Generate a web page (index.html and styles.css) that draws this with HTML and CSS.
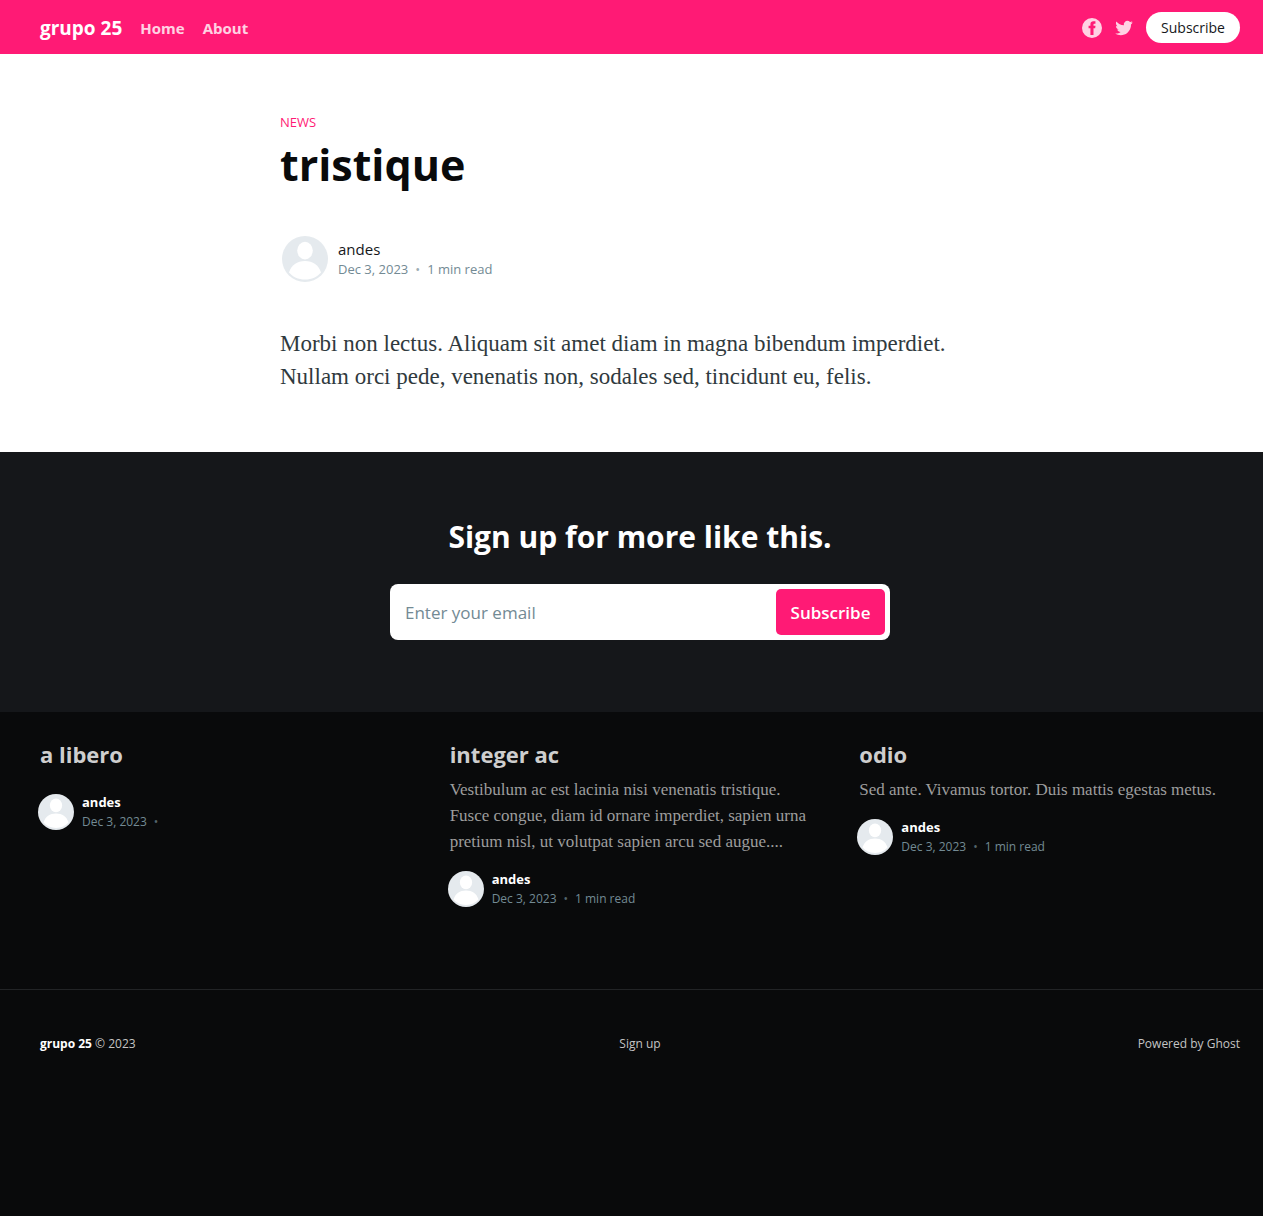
FILE: index.html
```html
<!DOCTYPE html>
<html lang="en">
<head>
<meta charset="utf-8">
<meta name="viewport" content="width=device-width, initial-scale=1">
<title>tristique</title>
<link rel="stylesheet" href="styles.css">
</head>
<body>
<svg class="sprite" aria-hidden="true">
  <symbol id="avatar" viewBox="0 0 46 46">
    <circle cx="23" cy="23" r="23" fill="#e5eaee"/>
    <ellipse cx="23" cy="14.600" rx="7.800" ry="8.800" fill="#fff"/>
    <path d="M7 36.500C9.500 29 15 25 23 25s13.500 4 16 11.500C35 41 30 43.500 23 43.500S11 41 7 36.500z" fill="#fff"/>
  </symbol>
</svg>

<header class="site-header gutter">
  <nav class="nav">
    <a class="brand" href="#">grupo 25</a>
    <a class="nav-link" href="#">Home</a>
    <a class="nav-link" href="#">About</a>
  </nav>
  <div class="actions">
    <a class="social" href="#" aria-label="Facebook">
      <svg width="20" height="20" viewBox="0 0 32 32"><path d="M16 0a16 16 0 1 0 0 32 16 16 0 0 0 0-32zm5.500 9.200h-1.700c-1.100 0-1.400.500-1.400 1.300V12.500h3.200l-.5 4h-2.700V27h-4.900V16.500H10.500v-4h3V9.500C13.500 6.500 15.400 5 18.200 5c1.300 0 2.700.1 3.300.2z" fill="currentColor"/></svg>
    </a>
    <a class="social" href="#" aria-label="Twitter">
      <svg width="20" height="20" viewBox="0 0 32 32"><path d="M30.063 7.313c-.813 1.125-1.750 2.125-2.875 2.938v.75c0 1.563-.188 3.125-.688 4.625a15.088 15.088 0 0 1-2.063 4.438c-.875 1.438-2 2.688-3.250 3.813a15.015 15.015 0 0 1-4.625 2.563c-1.813.688-3.750 1-5.750 1-3.250 0-6.188-.875-8.875-2.625.438.063.875.125 1.375.125 2.688 0 5.063-.875 7.188-2.500-1.250 0-2.375-.375-3.375-1.125s-1.688-1.688-2.063-2.875c.438.063.813.125 1.125.125.500 0 1-.063 1.500-.250-1.313-.250-2.438-.938-3.313-1.938a5.673 5.673 0 0 1-1.313-3.688v-.063c.813.438 1.688.688 2.625.688a5.228 5.228 0 0 1-1.875-2c-.500-.875-.688-1.813-.688-2.750 0-1.063.250-2.063.750-2.938 1.438 1.750 3.188 3.188 5.250 4.250s4.313 1.688 6.688 1.813a5.579 5.579 0 0 1 1.500-5.438c1.125-1.125 2.500-1.688 4.125-1.688s3.063.625 4.188 1.813a11.480 11.480 0 0 0 3.688-1.375c-.438 1.375-1.313 2.438-2.563 3.188 1.125-.125 2.188-.438 3.313-.875z" fill="currentColor"/></svg>
    </a>
    <button class="pill" type="button">Subscribe</button>
  </div>
</header>

<main>
  <article class="article gutter">
    <div class="article-inner">
      <a class="tag" href="#">NEWS</a>
      <h1 class="title">tristique</h1>
      <div class="byline">
        <svg class="avatar"><use href="#avatar"/></svg>
        <div>
          <a class="author" href="#">andes</a>
          <div class="meta"><time datetime="2023-12-03">Dec 3, 2023</time><span class="dot">•</span><span>1 min read</span></div>
        </div>
      </div>
      <p class="content">Morbi non lectus. Aliquam sit amet diam in magna bibendum imperdiet. Nullam orci pede, venenatis non, sodales sed, tincidunt eu, felis.</p>
    </div>
  </article>

  <section class="signup gutter">
    <h2 class="signup-title">Sign up for more like this.</h2>
    <form class="signup-form">
      <input class="email" type="email" placeholder="Enter your email" aria-label="Enter your email">
      <button class="submit" type="button">Subscribe</button>
    </form>
  </section>
</main>

<aside class="cards gutter">
  <article class="card">
    <h2 class="card-title"><a href="#">a libero</a></h2>
    <div class="byline small">
      <svg class="avatar"><use href="#avatar"/></svg>
      <div>
        <a class="author" href="#">andes</a>
        <div class="meta"><time datetime="2023-12-03">Dec 3, 2023</time><span class="dot">•</span></div>
      </div>
    </div>
  </article>
  <article class="card">
    <h2 class="card-title"><a href="#">integer ac</a></h2>
    <p class="excerpt">Vestibulum ac est lacinia nisi venenatis tristique. Fusce congue, diam id ornare imperdiet, sapien urna pretium nisl, ut volutpat sapien arcu sed augue....</p>
    <div class="byline small">
      <svg class="avatar"><use href="#avatar"/></svg>
      <div>
        <a class="author" href="#">andes</a>
        <div class="meta"><time datetime="2023-12-03">Dec 3, 2023</time><span class="dot">•</span><span>1 min read</span></div>
      </div>
    </div>
  </article>
  <article class="card">
    <h2 class="card-title"><a href="#">odio</a></h2>
    <p class="excerpt">Sed ante. Vivamus tortor. Duis mattis egestas metus.</p>
    <div class="byline small">
      <svg class="avatar"><use href="#avatar"/></svg>
      <div>
        <a class="author" href="#">andes</a>
        <div class="meta"><time datetime="2023-12-03">Dec 3, 2023</time><span class="dot">•</span><span>1 min read</span></div>
      </div>
    </div>
  </article>
</aside>

<footer class="site-footer gutter">
  <div><a class="footer-brand" href="#">grupo 25</a> © 2023</div>
  <a href="#">Sign up</a>
  <a class="powered" href="#">Powered by Ghost</a>
</footer>
</body>
</html>
```
FILE: styles.css
```css
:root {
  --pink: #ff1a75;
  --ink: #090a0b;
  --panel: #15171a;
  --sans: "Open Sans", "Noto Sans", sans-serif;
  --serif: "Liberation Serif", Georgia, serif;
}

* { box-sizing: border-box; }

body {
  margin: 0;
  background: var(--ink);
  font-family: var(--sans);
  color: var(--panel);
}

a { color: inherit; text-decoration: none; }
h1, h2, p { margin: 0; }
button { border: 0; font-family: inherit; cursor: pointer; }

.sprite { display: none; }

.gutter { padding-left: 40px; padding-right: 23px; }

.site-header {
  display: flex;
  align-items: center;
  justify-content: space-between;
  height: 54px;
  padding-top: 1px;
  background: var(--pink);
  color: #fff;
}

.nav { display: flex; align-items: center; gap: 18px; }
.brand { font-size: 19px; font-weight: 700; line-height: 28px; }
.nav-link { font-size: 15px; font-weight: 700; line-height: 20px; opacity: 0.8; }

.actions { display: flex; align-items: center; gap: 12px; }
.social { display: flex; opacity: 0.8; }

.pill {
  width: 94px;
  height: 31px;
  padding: 0;
  border-radius: 16px;
  background: #fff;
  color: var(--panel);
  font-size: 14px;
}

.article { background: #fff; padding-top: 58px; padding-bottom: 59px; }
.article-inner { max-width: 720px; margin: 0 auto; }

.tag { display: block; color: var(--pink); font-size: 13px; line-height: 20px; }
.title { color: var(--ink); font-size: 43px; font-weight: 700; line-height: 56px; margin-top: 5px; }

.byline { display: flex; align-items: center; gap: 10px; margin: 43px 0 0 2px; }
.avatar { display: block; width: 46px; height: 46px; }
.author { display: block; font-size: 15px; font-weight: 500; line-height: 20px; }
.meta { display: flex; gap: 7px; color: #738a94; font-size: 13px; line-height: 21px; }
.dot { opacity: 0.7; }

.content {
  margin-top: 45px;
  color: #303a3e;
  font-family: var(--serif);
  font-size: 23px;
  line-height: 33px;
}

.signup {
  display: flex;
  flex-direction: column;
  align-items: center;
  gap: 26px;
  padding-top: 64px;
  padding-bottom: 72px;
  background: var(--panel);
}
.signup-title { color: #fff; font-size: 30px; font-weight: 700; line-height: 42px; }
.signup-form {
  display: flex;
  width: 100%;
  max-width: 500px;
  padding: 5px;
  border-radius: 8px;
  background: #fff;
}
.email {
  flex: 1;
  min-width: 0;
  padding: 0 10px;
  border: 0;
  background: none;
  outline: 0;
  font-family: inherit;
  font-size: 17px;
}
.email::placeholder { color: #738a94; opacity: 1; }
.submit {
  width: 109px;
  height: 46px;
  padding: 0;
  border-radius: 5px;
  background: var(--pink);
  color: #fff;
  font-size: 17px;
  font-weight: 600;
}

.cards {
  display: grid;
  grid-template-columns: repeat(auto-fit, minmax(300px, 1fr));
  align-items: start;
  gap: 29px;
  padding-top: 27px;
  padding-bottom: 81px;
  border-bottom: 1px solid #222426;
}
.card-title { color: #cecece; font-size: 22px; font-weight: 700; line-height: 30px; }
.excerpt {
  max-width: 370px;
  margin-top: 8px;
  color: #9d9d9d;
  font-family: var(--serif);
  font-size: 17px;
  line-height: 26px;
}

.small { gap: 8px; margin: 15px 0 0 -2px; }
.card-title + .small { margin-top: 24px; }
.small .avatar { width: 36px; height: 36px; }
.small .author { color: #fff; font-size: 13px; font-weight: 700; line-height: 19px; }
.small .meta { font-size: 12px; line-height: 19px; }

.site-footer {
  display: grid;
  grid-template-columns: 1fr auto 1fr;
  padding-top: 44px;
  padding-bottom: 40px;
  color: #c4c4c4;
  font-size: 12px;
  line-height: 20px;
}
.footer-brand { color: #fff; font-weight: 700; }
.powered { text-align: right; }
```
